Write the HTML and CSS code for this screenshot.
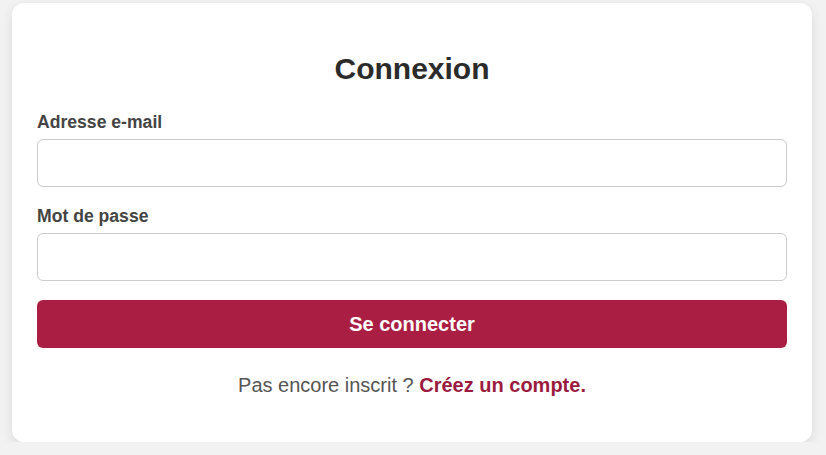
FILE: index.html
```html
<!DOCTYPE html>
<html lang="fr">
<head>
<meta charset="utf-8">
<title>Connexion</title>
<link rel="stylesheet" href="styles.css">
</head>
<body>
<div class="page">
  <form class="card">
    <h1 class="title">Connexion</h1>
    <label class="label" for="email">Adresse e-mail</label>
    <input class="input" id="email" type="email">
    <label class="label" for="pwd">Mot de passe</label>
    <input class="input" id="pwd" type="password">
    <button class="btn" type="button">Se connecter</button>
    <p class="foot">Pas encore inscrit ? <a class="link" href="#">Créez un compte.</a></p>
  </form>
</div>
</body>
</html>
```
FILE: styles.css
```css
html, body {
  margin: 0;
  background: #f2f2f2;
  font-family: "Liberation Sans", Arial, sans-serif;
}
.page {
  display: flex;
  justify-content: center;
  padding: 3px 14px 0 12px;
}
.card {
  width: 800px;
  box-sizing: border-box;
  background: #fff;
  border-radius: 12px;
  box-shadow: 0 4px 12px rgba(0,0,0,0.1);
  padding: 37px 25px 45px;
  display: flex;
  flex-direction: column;
}
.title {
  margin: 13px 0 27px;
  text-align: center;
  font-size: 30px;
  font-weight: bold;
  color: #2b2b2b;
  line-height: 32px;
}
.label {
  font-size: 17.6px;
  font-weight: bold;
  color: #444;
  line-height: 20px;
  margin-bottom: 7px;
}
.input {
  height: 48px;
  box-sizing: border-box;
  border: 1px solid #ccc;
  border-radius: 6px;
  margin: 0 0 19px;
  font-size: 16px;
}
.btn {
  height: 48px;
  border: none;
  border-radius: 6px;
  background: #ab1e44;
  color: #fff;
  font-family: inherit;
  font-size: 20px;
  font-weight: bold;
  margin-top: 0;
}
.foot {
  margin: 25px 0 0;
  text-align: center;
  font-size: 20px;
  color: #555;
  line-height: 24px;
}
.link {
  color: #9b1b3f;
  font-weight: bold;
  text-decoration: none;
}
```
